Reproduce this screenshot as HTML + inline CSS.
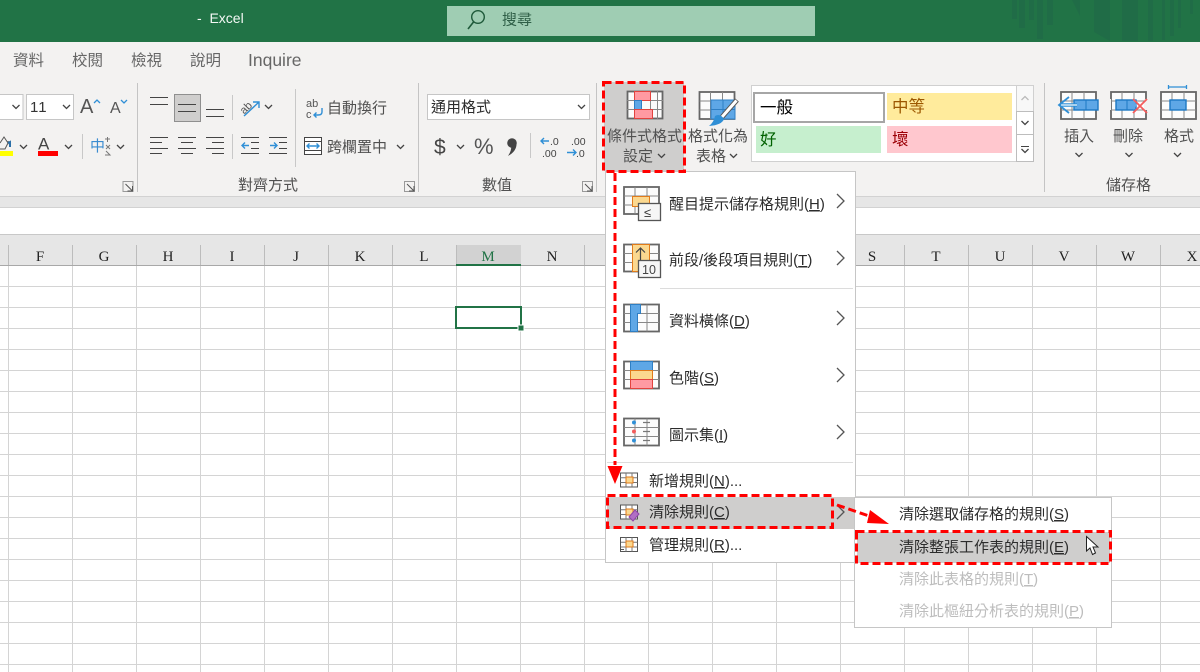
<!DOCTYPE html>
<html lang="zh-Hant"><head><meta charset="utf-8"><title>Excel</title>
<style>
html,body{margin:0;padding:0;background:#fff}
body{width:1200px;height:672px;overflow:hidden}
svg{display:block}
text{font-family:"Liberation Sans","Noto Sans CJK TC",sans-serif}
.rb{font-size:15px;fill:#505050}
.m{font-size:15px;fill:#2c2c2c}
.d{font-size:15px;fill:#bdbdbd}
.h{font-family:"Liberation Serif",serif;font-size:15px;fill:#222;text-anchor:middle}
.u{text-decoration:underline}
.c{fill:none;stroke:#444;stroke-width:1.3}
.g{fill:#fcfcfc;stroke:#666;stroke-width:1.800}
.l{fill:none;stroke:#444;stroke-width:1}
.bl{fill:none;stroke:#2f8fd6;stroke-width:1.400}
.sep{stroke:#c8c8c8;stroke-width:1}
.dash{fill:none;stroke:#f00;stroke-width:3;stroke-dasharray:8 4}
</style></head><body>
<svg width="1200" height="672" viewBox="0 0 1200 672" xmlns="http://www.w3.org/2000/svg">
<defs>
<pattern id="cells" x="8" y="265" width="64" height="21" patternUnits="userSpaceOnUse">
<path d="M.5 0V21M0 .5H64" stroke="#d4d4d4" fill="none"/>
</pattern>
<polyline id="cv" points="0,0 3.5,3.5 7,0" fill="none" stroke="#444" stroke-width="1.300"/>
<polyline id="rc" points="0,0 7,7 0,14" fill="none" stroke="#555" stroke-width="1.300"/>
<g id="lau"><path d="M.5 .5H10.500V10.500H.5Z" fill="none" stroke="#999"/><path d="M3 3L10 10M10 5V10H5" fill="none" stroke="#555"/></g>
<g id="gr"><rect x="1" y="1" width="35" height="27" class="g"/><path d="M1 10H36M1 19H36M12 1V28M24 1V28" fill="none" stroke="#888" stroke-width="1"/></g>
<g id="sm"><rect x=".5" y=".5" width="17" height="14" fill="#fff" stroke="#555"/><path d="M6 .5V14.500M12 .5V14.500M.5 5.300H17.500M.5 10H17.500" fill="none" stroke="#777"/></g>
</defs>

<!-- title bar -->
<rect width="1200" height="42" fill="#217346"/>
<g fill="#206c47">
<rect x="1012" width="5" height="19"/><rect x="1019" width="6" height="28"/><rect x="1029" width="5" height="20"/><rect x="1037" width="6" height="39"/><rect x="1047" width="6" height="25"/>
<path d="M1072 0H1080V16Z"/><path d="M1094 0H1110V41L1094 32Z"/><rect x="1122" width="16" height="41"/>
<rect x="1148" width="5" height="41"/><rect x="1162" width="3" height="40"/><rect x="1170" width="4" height="36"/><rect x="1178" width="3" height="28"/><rect x="1190" width="3" height="14"/>
</g>
<text x="197" y="23" font-size="14" fill="#f4f8f5">-&#160;&#160;Excel</text>
<rect x="447" y="6" width="368" height="30" fill="#9fcdb3"/>
<circle cx="478" cy="17" r="6.300" fill="none" stroke="#1f5a3a" stroke-width="1.400"/><path d="M473.500 22L468 29" stroke="#1f5a3a" stroke-width="1.600"/>
<text x="502" y="24.500" font-size="15" fill="#2f5f47">搜尋</text>

<!-- ribbon -->
<rect y="42" width="1200" height="154" fill="#f3f2f1"/>
<g font-size="15.500" fill="#666">
<text x="13" y="65.500">資料</text><text x="72" y="65.500">校閱</text><text x="131" y="65.500">檢視</text><text x="190" y="65.500">說明</text>
<text x="248" y="66" font-size="17.500">Inquire</text></g>
<path d="M137.500 83V192M418.500 83V192M596.500 83V192M1044.500 83V192" stroke="#c4c4c4" fill="none"/>

<!-- font -->
<rect x="-3" y="94.500" width="26" height="25" fill="#fff" stroke="#c6c6c6"/>
<rect x="26.500" y="94.500" width="47" height="25" fill="#fff" stroke="#c6c6c6"/>
<use href="#cv" x="12.500" y="105"/><use href="#cv" x="63" y="105"/>
<text x="30" y="112" font-size="15" fill="#333" letter-spacing="1">11</text>
<text x="80" y="113" font-size="20" fill="#555">A</text>
<path d="M94 103L97 100L100 103" fill="none" stroke="#2f8fd6" stroke-width="1.300"/>
<text x="110" y="113" font-size="16" fill="#555">A</text>
<path d="M121 100L124 103L127 100" fill="none" stroke="#2f8fd6" stroke-width="1.300"/>
<path d="M0 143L4 137L8 143L5 149H0M8 141L10 146" fill="none" stroke="#555"/><path d="M8 143L10 142V147" stroke="#2a6fa8" stroke-width="2" fill="none"/>
<rect x="0" y="151" width="13" height="5" fill="#ff0"/>
<use href="#cv" x="20" y="145"/>
<text x="38" y="149.500" font-size="17" fill="#444">A</text>
<rect x="38" y="151" width="20" height="5" fill="#f00"/>
<use href="#cv" x="65" y="145"/>
<path class="sep" d="M82.500 134V159"/>
<text x="90" y="151" font-size="15" fill="#3a8cd0">中</text>
<path d="M105 139H110M107.500 137V142M106 145L110 149M110 145L106 149M105 155H110L106 151" fill="none" stroke="#777" stroke-width="1"/>
<use href="#cv" x="117" y="145"/>
<use href="#lau" x="122.500" y="181"/>

<!-- alignment -->
<path class="l" d="M150 97.500H168M150 104.500H168"/>
<rect x="174.500" y="94.500" width="26" height="27" fill="#cfcecd" stroke="#8f8f8f"/>
<path class="l" d="M178 104.500H196M178 111.500H196"/>
<path class="l" d="M206 109.500H224M206 116.500H224"/>
<path class="sep" d="M232.500 95V120M232.500 134V159M295.500 89V167"/>
<g transform="translate(241 97)"><text transform="rotate(-45 6 12)" x="0" y="14" font-size="11" fill="#555">ab</text><path class="bl" d="M3 19L18 5M12 5H18V11"/></g>
<use href="#cv" x="265" y="105"/>
<text x="306" y="107" font-size="11" fill="#555">ab</text><text x="306" y="118" font-size="11" fill="#555">c</text>
<path class="bl" d="M322 108V112Q322 115 318 115H314M316.500 112.500L314 115L316.500 117.500"/>
<text x="327" y="113" class="rb">自動換行</text>
<path class="l" d="M150 137.500H168M150 142.500H162M150 148.500H168M150 153.500H162"/>
<path class="l" d="M178 137.500H196M181 142.500H193M178 148.500H196M181 153.500H193"/>
<path class="l" d="M206 137.500H224M212 142.500H224M206 148.500H224M212 153.500H224"/>
<path class="l" d="M241 137.500H259M251 142.500H259M251 148.500H259M241 153.500H259"/>
<path class="bl" d="M249 145.500H242M245 142.500L242 145.500L245 148.500"/>
<path class="l" d="M269 137.500H287M279 142.500H287M279 148.500H287M269 153.500H287"/>
<path class="bl" d="M270 145.500H277M274 142.500L277 145.500L274 148.500"/>
<rect x="304.500" y="137.500" width="17" height="17" fill="#fff" stroke="#444"/><path d="M304.500 141.500H321.500M304.500 150.500H321.500" stroke="#444"/>
<path class="bl" d="M307 146H319M309.500 143.500L307 146L309.500 148.500M316.500 143.500L319 146L316.500 148.500"/>
<text x="327" y="152" class="rb">跨欄置中</text>
<use href="#cv" x="397" y="145"/>
<text x="238" y="190" class="rb">對齊方式</text>
<use href="#lau" x="404" y="181"/>

<!-- number -->
<rect x="427.500" y="94.500" width="162" height="25" fill="#fff" stroke="#c6c6c6"/>
<text x="431" y="112" class="m">通用格式</text>
<use href="#cv" x="578" y="105"/>
<text x="434" y="154" font-size="21" fill="#444">$</text>
<use href="#cv" x="457" y="145"/>
<text x="474" y="154" font-size="22" fill="#555">%</text>
<circle cx="512" cy="143" r="4.800" fill="#444"/><path d="M516.500 143Q517 151 508 156Q512 150 511 146Z" fill="#444"/>
<path class="sep" d="M530.500 133V158"/>
<path class="bl" d="M549 141H541M544 138L541 141L544 144"/>
<text x="550" y="145" font-size="10.500" fill="#444">.0</text><text x="542" y="157" font-size="10.500" fill="#444">.00</text>
<text x="571" y="145" font-size="10.500" fill="#444">.00</text><text x="576" y="157" font-size="10.500" fill="#444">.0</text>
<path class="bl" d="M567 152.500H576M573 149.500L576 152.500L573 155.500"/>
<text x="482" y="190" class="rb">數值</text>
<use href="#lau" x="582" y="181"/>

<!-- conditional format button -->
<rect x="604" y="82" width="80" height="89" fill="#cfcecd"/>
<rect x="627.500" y="91.500" width="35" height="27" fill="#fbfbfb" stroke="#666" stroke-width="1.800"/>
<path d="M627 100.500H663M627 109.500H663M634.500 91V119M650.500 91V119M657.500 91V119" stroke="#888" fill="none"/>
<rect x="634.500" y="91.500" width="16" height="9" fill="#ff9aa2" stroke="#e2433f"/>
<rect x="634.500" y="100.500" width="7" height="9" fill="#5ea7e6" stroke="#2f7fc4"/>
<rect x="634.500" y="109.500" width="18" height="9" fill="#ff9aa2" stroke="#e2433f"/>
<text x="607" y="141" class="rb">條件式格式</text>
<text x="623" y="161" class="rb">設定</text>
<use href="#cv" x="658" y="154"/>

<!-- format as table -->
<use href="#gr" x="698.500" y="91"/>
<rect x="711" y="100" width="24" height="19" fill="#5ea7e6" stroke="#2f7fc4"/><path d="M711 109.500H735M723 100V119" stroke="#2f7fc4"/>
<path d="M737 100L722 117" stroke="#555" stroke-width="5"/><path d="M736.500 100.500L722 117" stroke="#fff" stroke-width="3"/>
<path d="M715 116Q720 113 724 119Q722 125 709 126Q714 122 715 116Z" fill="#2f8fd6"/>
<text x="688" y="141" class="rb">格式化為</text>
<text x="696" y="161" class="rb">表格</text>
<use href="#cv" x="730" y="154"/>

<!-- styles gallery -->
<rect x="751.500" y="85.500" width="282" height="76" fill="#fff" stroke="#d0d0d0"/>
<rect x="754" y="93" width="130" height="29" fill="#fff" stroke="#a6a6a6" stroke-width="2"/>
<text x="760" y="113" font-size="16.500" fill="#000">一般</text>
<rect x="887" y="93" width="125" height="27" fill="#ffeb9c"/>
<text x="892" y="112" font-size="16.500" fill="#9c5700">中等</text>
<rect x="756" y="126" width="125" height="27" fill="#c6efce"/>
<text x="760" y="145" font-size="16.500" fill="#006100">好</text>
<rect x="887" y="126" width="125" height="27" fill="#ffc7ce"/>
<text x="892" y="145" font-size="16.500" fill="#9c0006">壞</text>
<rect x="1016.500" y="85.500" width="17" height="26" fill="#f8f8f8" stroke="#d0d0d0"/>
<rect x="1016.500" y="111.500" width="17" height="23" fill="#fff" stroke="#bdbdbd"/>
<rect x="1016.500" y="134.500" width="17" height="27" fill="#fff" stroke="#bdbdbd"/>
<path d="M1021.500 100L1025 96.500L1028.500 100" fill="none" stroke="#bbb" stroke-width="1.300"/>
<use href="#cv" x="1021.500" y="121"/>
<path d="M1021 146.500H1029" stroke="#444"/><use href="#cv" x="1021.500" y="149"/>

<!-- cells group -->
<use href="#gr" x="1060" y="91"/>
<rect x="1074" y="100" width="24" height="10" fill="#5ea7e6" stroke="#1c78c4" stroke-width="1.400"/><path d="M1086 100V110" stroke="#1c78c4"/>
<path d="M1077 105H1060" stroke="#2f8fd6" stroke-width="3.500"/><path d="M1077 105H1061" stroke="#fff" stroke-width="1.200"/>
<path d="M1069 97L1059 105L1069 113" fill="none" stroke="#2f8fd6" stroke-width="1.800"/>
<text x="1064" y="141" class="rb">插入</text><use href="#cv" x="1075.500" y="153"/>
<use href="#gr" x="1110" y="91"/>
<rect x="1108" y="99" width="3" height="11" fill="#f3f2f1"/><rect x="1144" y="99" width="4" height="11" fill="#f3f2f1"/>
<rect x="1116" y="100" width="20" height="10" fill="#5ea7e6" stroke="#1c78c4" stroke-width="1.400"/><path d="M1127 100V110" stroke="#1c78c4"/>
<path d="M1133 100L1137 105L1133 110Z" fill="#5ea7e6"/>
<path d="M1133 99L1147 113M1147 99L1133 113" stroke="#f45c5c" stroke-width="1.800"/>
<text x="1113" y="141" class="rb">刪除</text><use href="#cv" x="1125.500" y="153"/>
<use href="#gr" x="1160" y="91"/>
<path d="M1168 87H1187M1168.500 85V89M1186.500 85V89" stroke="#2f8fd6" stroke-width="1.300" fill="none"/>
<rect x="1170" y="100" width="16" height="10" fill="#5ea7e6" stroke="#1c78c4" stroke-width="1.400"/>
<text x="1164" y="141" class="rb">格式</text><use href="#cv" x="1174" y="153"/>
<text x="1106" y="190" class="rb">儲存格</text>

<!-- sheet chrome -->
<rect y="196" width="1200" height="11" fill="#e6e6e6"/>
<path d="M0 196.500H1200M0 207.500H1200" stroke="#d2d2d2"/>
<rect y="208" width="1200" height="26" fill="#fff"/>
<path d="M0 234.500H1200" stroke="#c8c8c8"/>
<rect y="235" width="1200" height="30" fill="#e6e6e6"/>
<rect y="265" width="1200" height="407" fill="#fff"/>
<rect y="265" width="1200" height="407" fill="url(#cells)"/>
<path d="M0 265.500H1200" stroke="#a8a8a8"/>
<path d="M8.500 245V265M72.500 245V265M136.500 245V265M200.500 245V265M264.500 245V265M328.500 245V265M392.500 245V265M456.500 245V265M520.500 245V265M584.500 245V265M840.500 245V265M904.500 245V265M968.500 245V265M1032.500 245V265M1096.500 245V265M1160.500 245V265" stroke="#bcbcbc"/>
<rect x="457" y="245" width="64" height="19" fill="#d2d2d2"/>
<rect x="456" y="264" width="65" height="2" fill="#217346"/>
<text class="h" x="40" y="261">F</text><text class="h" x="104" y="261">G</text><text class="h" x="168" y="261">H</text><text class="h" x="232" y="261">I</text><text class="h" x="296" y="261">J</text><text class="h" x="360" y="261">K</text><text class="h" x="424" y="261">L</text><text class="h" x="488" y="261" style="fill:#217346">M</text><text class="h" x="552" y="261">N</text><text class="h" x="872" y="261">S</text><text class="h" x="936" y="261">T</text><text class="h" x="1000" y="261">U</text><text class="h" x="1064" y="261">V</text><text class="h" x="1128" y="261">W</text><text class="h" x="1192" y="261">X</text>
<rect x="456" y="307" width="65" height="21" fill="#fff" stroke="#217346" stroke-width="2"/>
<rect x="518" y="325" width="6" height="6" fill="#217346" stroke="#fff"/>

<!-- main menu -->
<rect x="605.500" y="171.500" width="250" height="391" fill="#fff" stroke="#c6c6c6"/>
<!-- item 1 -->
<use href="#gr" x="623" y="186"/>
<rect x="632.500" y="196.500" width="17" height="10" fill="#fbd88f" stroke="#e17b1b"/>
<rect x="638.500" y="203.500" width="22" height="17" fill="#f6f6f6" stroke="#555" stroke-width="1.300"/>
<text x="644" y="217" font-size="13" fill="#333">≤</text>
<text x="669" y="209" class="m">醒目提示儲存格規則(<tspan class="u">H</tspan>)</text>
<use href="#rc" x="837" y="194"/>
<!-- item 2 -->
<use href="#gr" x="623" y="243.500"/>
<rect x="632.500" y="244.500" width="17" height="27" fill="#fbd88f" stroke="#e17b1b"/>
<path d="M640.500 260V248M636 252.500L640.500 248L645 252.500" fill="none" stroke="#444" stroke-width="1.200"/>
<rect x="638.500" y="260.500" width="22" height="17" fill="#f6f6f6" stroke="#555" stroke-width="1.300"/>
<text x="642" y="274" font-size="12.500" fill="#444">10</text>
<text x="669" y="265" class="m">前段/後段項目規則(<tspan class="u">T</tspan>)</text>
<use href="#rc" x="837" y="251"/>
<path d="M660 288.500H853" stroke="#dcdcdc"/>
<!-- item 3 -->
<use href="#gr" x="623" y="303.500"/>
<path d="M630.500 304.500H640.500V313.500H637.500V331.500H630.500Z" fill="#5ea7e6" stroke="#2f7fc4"/>
<text x="669" y="326" class="m">資料橫條(<tspan class="u">D</tspan>)</text>
<use href="#rc" x="837" y="311"/>
<!-- item 4 -->
<use href="#gr" x="623" y="360.500"/>
<rect x="630.500" y="361.500" width="22" height="9" fill="#5ea7e6" stroke="#2f7fc4"/>
<rect x="630.500" y="370.500" width="22" height="9" fill="#fbd88f" stroke="#e17b1b"/>
<rect x="630.500" y="379.500" width="22" height="9" fill="#ff9aa2" stroke="#e2433f"/>
<text x="669" y="383" class="m">色階(<tspan class="u">S</tspan>)</text>
<use href="#rc" x="837" y="368"/>
<!-- item 5 -->
<use href="#gr" x="623" y="417.500"/>
<circle cx="634" cy="422.500" r="2" fill="#2f8fd6"/><circle cx="634" cy="431.500" r="2" fill="#f25c5c"/><circle cx="634" cy="440.500" r="2" fill="#2f8fd6"/>
<path d="M643 422.500H650M643 431.500H650M643 440.500H650" stroke="#777" stroke-width="1.300"/>
<text x="669" y="440" class="m">圖示集(<tspan class="u">I</tspan>)</text>
<use href="#rc" x="837" y="425"/>
<path d="M607 462.500H853" stroke="#dcdcdc"/>
<!-- small items -->
<use href="#sm" x="620" y="472.500"/><rect x="626" y="477" width="7" height="6" fill="#fbd88f" stroke="#e17b1b"/>
<text x="649" y="486" class="m">新增規則(<tspan class="u">N</tspan>)...</text>
<rect x="607" y="497" width="248" height="32" fill="#cfcecd"/>
<use href="#sm" x="620" y="504.500"/><rect x="626" y="509" width="7" height="6" fill="#fbd88f" stroke="#e17b1b"/>
<path d="M629 517L635 510L639 514L633 521Z" fill="#b06fc4" stroke="#8e44a8"/>
<text x="649" y="517" class="m">清除規則(<tspan class="u">C</tspan>)</text>
<use href="#rc" x="837" y="505"/>
<use href="#sm" x="620" y="537"/><path d="M620.500 537.500V549.500H624" fill="none" stroke="#555"/><rect x="626" y="541" width="7" height="6" fill="#fbd88f" stroke="#e17b1b"/>
<text x="649" y="550" class="m">管理規則(<tspan class="u">R</tspan>)...</text>

<!-- submenu -->
<rect x="854.500" y="497.500" width="257" height="130" fill="#fff" stroke="#c6c6c6"/>
<rect x="857" y="532" width="253" height="31" fill="#cfcecd"/>
<text x="899" y="519" class="m">清除選取儲存格的規則(<tspan class="u">S</tspan>)</text>
<text x="899" y="552" class="m">清除整張工作表的規則(<tspan class="u">E</tspan>)</text>
<text x="899" y="584" class="d">清除此表格的規則(<tspan class="u">T</tspan>)</text>
<text x="899" y="616" class="d">清除此樞紐分析表的規則(<tspan class="u">P</tspan>)</text>
<!-- cursor -->
<path d="M1086.500 536.500V551L1090 548L1092.500 554.500L1095.500 553L1093 547H1098Z" fill="#fff" stroke="#222"/>

<!-- red annotations -->
<rect x="603.500" y="82.500" width="81" height="89" class="dash"/>
<path d="M615 173V465" class="dash"/>
<path d="M607.500 466H622.500L615 484Z" fill="#f00"/>
<rect x="607.500" y="495.500" width="225" height="32" class="dash"/>
<rect x="856.500" y="531.500" width="254" height="32" class="dash"/>
<path d="M837 505L872 517" class="dash"/>
<path d="M870 510L889 524L867 523Z" fill="#f00"/>
</svg>
</body></html>
